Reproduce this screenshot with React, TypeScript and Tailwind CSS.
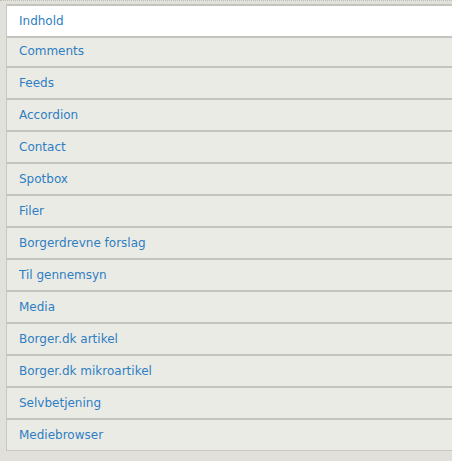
import React from 'react';

const TABS = [
  'Indhold',
  'Comments',
  'Feeds',
  'Accordion',
  'Contact',
  'Spotbox',
  'Filer',
  'Borgerdrevne forslag',
  'Til gennemsyn',
  'Media',
  'Borger.dk artikel',
  'Borger.dk mikroartikel',
  'Selvbetjening',
  'Mediebrowser',
];

const rowClass = (i: number) => {
  if (i === 0) return 'h-[32px] bg-white';
  if (i === 1) return 'h-[30px] pb-[2px] bg-[#ebebe6]';
  return 'h-[32px] bg-[#ebebe6]';
};

const App: React.FC = () => {
  return (
    <div className="w-[452px] h-[461px] bg-[#e1e0da] overflow-hidden font-['DejaVu_Sans',sans-serif]">
      <div className="h-px border-t border-dotted border-[#bdbdb8]" />
      <ul className="ml-[6px] mt-[3px] border-l border-b border-[#c8c8c3]">
        {TABS.map((tab, i) => (
          <li
            key={tab}
            className={`border-t-2 border-[#c4c4bf] flex items-center pl-[12px] text-[12px] ${rowClass(i)}`}
          >
            <a href="#" className="text-[#2e7ec2] no-underline">{tab}</a>
          </li>
        ))}
      </ul>
    </div>
  );
};

export default App;
